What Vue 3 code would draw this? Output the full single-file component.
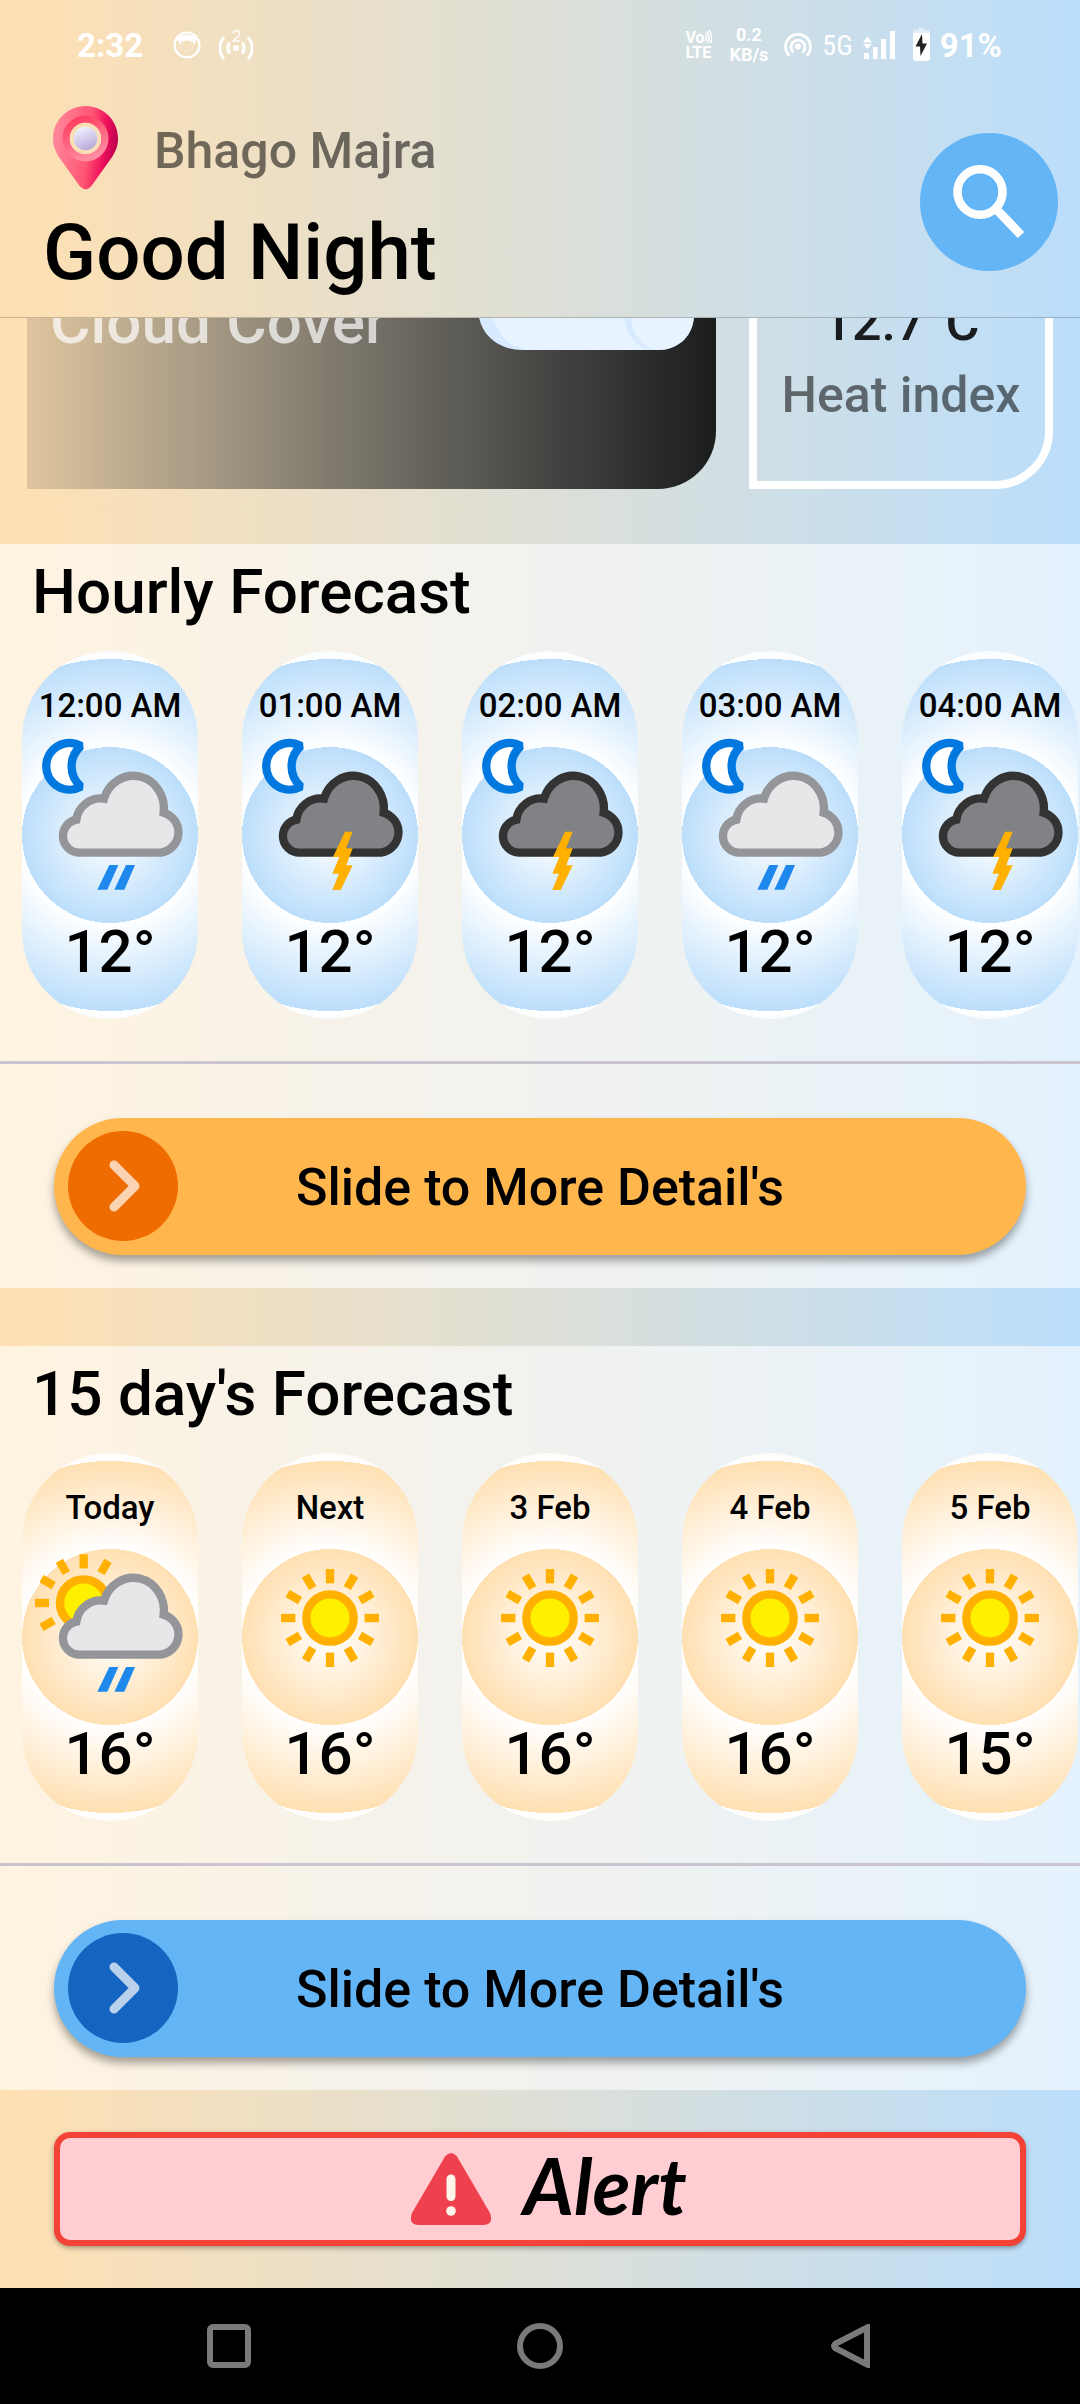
<script setup>
const forecasts = [
  {
    id: 'hourly',
    title: 'Hourly Forecast',
    items: [
      { label: '12:00 AM', temp: '12°', icon: 'night-rain' },
      { label: '01:00 AM', temp: '12°', icon: 'night-thunder' },
      { label: '02:00 AM', temp: '12°', icon: 'night-thunder' },
      { label: '03:00 AM', temp: '12°', icon: 'night-rain' },
      { label: '04:00 AM', temp: '12°', icon: 'night-thunder' },
    ],
  },
  {
    id: 'daily',
    title: "15 day's Forecast",
    items: [
      { label: 'Today', temp: '16°', icon: 'day-rain' },
      { label: 'Next', temp: '16°', icon: 'sunny' },
      { label: '3 Feb', temp: '16°', icon: 'sunny' },
      { label: '4 Feb', temp: '16°', icon: 'sunny' },
      { label: '5 Feb', temp: '15°', icon: 'sunny' },
    ],
  },
]

const rays = (from, to) => Array.from({ length: to - from }, (_, i) => (from + i) * 30)
const cloudPath =
  'M238 668A50 50 0 0 1 229 569A74 74 0 0 1 312 506A92 98 0 0 1 491 548A64 62 0 0 1 483 668Z'
</script>

<template>
  <div class="screen">
    <header class="top">
      <div class="status">
        <span class="clock">2:32</span>
        <svg class="face" width="28" height="28" viewBox="0 0 28 28">
          <circle cx="14" cy="14" r="12.4" fill="none" stroke="#fff" stroke-width="2.4" />
          <path
            d="M4 8C8 2 20 2 24 8L21 14L19.500 10.500H17L14.800 9.500H12.500L10.500 10.500H8.500L7 14Z"
            fill="#fff"
          />
          <path d="M8 16h1M19 16h1M12 20h1M16 19h1M17 13h1M10 13h1" stroke="#fff" stroke-width="1" />
        </svg>
        <svg class="tether" width="34" height="32" viewBox="0 0 34 32" fill="none" stroke="#fff">
          <circle cx="17" cy="19" r="3" fill="#fff" stroke="none" />
          <path d="M11 13.500A8 8 0 0 0 11 24.500M23 13.500A8 8 0 0 1 23 24.500" stroke-width="3" />
          <path d="M5 8.500A16 16 0 0 0 5 30M29 8.500A16 16 0 0 1 29 30" stroke-width="3" />
          <path d="M14.300 4.500C14.500 0.500 20.500 0.500 20.500 4.500C20.500 7 17 8.500 14 12.200H21" stroke-width="1.300" />
        </svg>
        <span class="spacer"></span>
        <span class="volte">
          <span class="vo">Vo<svg width="7" height="14" viewBox="0 0 7 14" fill="none" stroke="#fff" stroke-width="1.600"><path d="M0 4.500A4 4 0 0 1 0 11M1 1.500A8 8 0 0 1 2.500 13M3.500 0A11 11 0 0 1 5.500 13" /></svg></span>
          <span>LTE</span>
        </span>
        <span class="speed"><span>0.2</span><span>KB/s</span></span>
        <svg class="hotspot" width="28" height="26" viewBox="0 0 28 26" fill="none" stroke="#fff" stroke-width="2.800">
          <circle cx="14" cy="14.500" r="3" fill="#fff" stroke="none" />
          <path d="M9.500 20.500A7 7 0 1 1 18.500 20.500" />
          <path d="M5.500 23.800A12.400 12.400 0 1 1 22.500 23.800" />
        </svg>
        <span class="net">5G</span>
        <svg class="bars" width="32" height="28" viewBox="0 0 32 28" fill="#fff">
          <path d="M0 11.500L4.500 5.500L9 11.500ZM0 13L4.500 18L9 13Z" />
          <path d="M1 22h5v6h-5zM10 16h4.500v12H10zM18 8h5v20h-5zM27 0h5v28h-5z" />
        </svg>
        <svg class="battery" width="17" height="34" viewBox="0 0 17 34">
          <path d="M5.500 0h6v2H15q2 0 2 2.500V6H0V4.500Q0 2 2 2H5.500Z" fill="#e2effb" />
          <path d="M0 5h17v25q0 3-3 3H3q-3 0-3-3Z" fill="#fff" />
          <path d="M9 6L2.500 18.500H7L7.500 28L14 15.500H9.500Z" fill="#222" />
        </svg>
        <span class="clock">91%</span>
      </div>

      <div class="heading">
        <div>
          <div class="place">
            <svg width="65" height="84" viewBox="0 0 65 84">
              <defs>
                <linearGradient id="pinBody" x1="0" y1="0.300" x2="1" y2="0.450">
                  <stop offset="0" stop-color="#ff8a9c" />
                  <stop offset="0.550" stop-color="#ff5674" />
                  <stop offset="0.800" stop-color="#ee0f5c" />
                  <stop offset="1" stop-color="#b8004a" />
                </linearGradient>
                <linearGradient id="pinRing" x1="0.200" y1="0" x2="0.600" y2="1">
                  <stop offset="0" stop-color="#ff3f60" />
                  <stop offset="1" stop-color="#ff8ba0" />
                </linearGradient>
                <linearGradient id="pinBall" x1="0.300" y1="0" x2="0.700" y2="1">
                  <stop offset="0" stop-color="#f1f3ff" />
                  <stop offset="1" stop-color="#b7a5d8" />
                </linearGradient>
              </defs>
              <path
                d="M32.500 0C14.500 0 0 14.500 0 32.500C0 41 3 47 8 54L27 80.500Q32.500 86 38 80.500L57 54C62 47 65 41 65 32.500C65 14.500 50.500 0 32.500 0ZM32.500 16.500A16 16 0 1 1 32.500 48.500A16 16 0 1 1 32.500 16.500Z"
                fill="url(#pinBody)"
                fill-rule="evenodd"
              />
              <circle cx="32.500" cy="32.500" r="19.500" fill="none" stroke="url(#pinRing)" stroke-width="7" />
              <circle cx="32.500" cy="32.500" r="11.800" fill="url(#pinBall)" />
            </svg>
            <span class="place-name">Bhago Majra</span>
          </div>
          <h1>Good Night</h1>
        </div>
        <button class="search" type="button" aria-label="Search">
          <svg width="72" height="74" viewBox="0 0 72 74" fill="none" stroke="#fff">
            <ellipse cx="27" cy="27" rx="22.500" ry="22.800" stroke-width="8.500" />
            <path d="M45 46L68 70" stroke-width="9" />
          </svg>
        </button>
      </div>
    </header>

    <main>
      <div class="stats">
        <article class="cover">
          <span>Cloud Cover</span>
          <svg width="216" height="130" viewBox="0 0 216 130">
            <path
              d="M44 130C18 130 0 112 0 88C0 62 18 46 42 46C48 18 72 0 102 0C136 0 162 22 166 54C196 52 216 70 216 94C216 116 200 130 180 130Z"
              fill="#d8eaff"
            />
            <path
              d="M56 130C32 130 14 112 14 88C14 62 30 46 52 46C58 20 80 4 106 4C134 4 156 26 160 56C150 64 145 78 146 92C146 112 158 130 176 130Z"
              fill="#e7f4ff"
            />
            <path d="M153 94C153 72 168 57 184 57C204 58 216 74 216 94C216 116 200 130 180 130C164 128 153 114 153 94Z" fill="#e7f4ff" />
          </svg>
        </article>
        <article class="heat">
          <strong>12.7°C</strong>
          <span>Heat index</span>
        </article>
      </div>

      <section v-for="f in forecasts" :key="f.id" class="forecast" :class="f.id">
        <h2>{{ f.title }}</h2>
        <ul>
          <li v-for="item in f.items" :key="item.label">
            <span class="label">{{ item.label }}</span>
            <svg class="weather" viewBox="66 351 528 528">
              <g v-if="item.icon === 'day-rain'" stroke="#ffb000" stroke-width="25">
                <circle cx="251" cy="513" r="71" fill="#fff000" />
                <path
                  v-for="a in rays(5, 11)"
                  :key="a"
                  d="M355 513H397"
                  :transform="`rotate(${a} 251 513)`"
                />
              </g>
              <g v-if="item.icon === 'sunny'" stroke="#ffb000" stroke-width="25">
                <circle cx="330" cy="558" r="71" fill="#fff000" />
                <path
                  v-for="a in rays(0, 12)"
                  :key="a"
                  d="M434 558H477"
                  :transform="`rotate(${a} 330 558)`"
                />
              </g>
              <path
                v-if="item.icon.startsWith('night')"
                d="M243 348A70 70 0 1 0 243 470A80 80 0 0 1 243 348Z"
                fill="#fff"
                stroke="#0078e0"
                stroke-width="25"
                stroke-linejoin="bevel"
              />
              <g v-if="item.icon.endsWith('rain')">
                <path :d="cloudPath" fill="#e6e7e8" stroke="#939598" stroke-width="25" />
                <path d="M328 705H355L322 779H292ZM378 705H405L373 779H343Z" fill="#1e88ec" />
              </g>
              <g v-if="item.icon === 'night-thunder'">
                <path :d="cloudPath" fill="#818286" stroke="#333" stroke-width="25" />
                <path
                  d="M375 605H398L378 655H398L379 706H398L362 780H337L357 731H337L358 681H339Z"
                  fill="#ffb000"
                />
              </g>
            </svg>
            <span class="temp">{{ item.temp }}</span>
          </li>
        </ul>
        <hr />
        <button class="slide" type="button">
          <span class="knob">
            <svg width="32" height="52" viewBox="0 0 32 52">
              <path
                d="M5 5L26 26L5 47"
                fill="none"
                stroke="#fff"
                stroke-opacity="0.700"
                stroke-width="9"
                stroke-linecap="round"
                stroke-linejoin="round"
              />
            </svg>
          </span>
          <span class="slide-text">Slide to More Detail's</span>
        </button>
      </section>

      <button class="alert" type="button">
        <svg width="80" height="72" viewBox="0 0 80 72">
          <path d="M34 3.500Q40-3.500 46 3.500L79 60Q83 71 73 72H7Q-3 71 1 60Z" fill="#ef404e" />
          <path d="M40 26V43.500" stroke="#fff5ea" stroke-width="9" stroke-linecap="round" />
          <circle cx="40" cy="58" r="4.800" fill="#fff5ea" />
        </svg>
        <span class="alert-text">Alert</span>
      </button>
    </main>

    <nav class="system">
      <button type="button" aria-label="Recent apps">
        <svg width="44" height="44" viewBox="0 0 44 44"><rect x="3" y="3" width="38" height="38" rx="3" /></svg>
      </button>
      <button type="button" aria-label="Home">
        <svg width="46" height="46" viewBox="0 0 46 46"><circle cx="23" cy="23" r="20" /></svg>
      </button>
      <button type="button" aria-label="Back">
        <svg width="40" height="44" viewBox="0 0 40 44"><path d="M36 3.500V40.500L4 24Q2 22 4 20Z" /></svg>
      </button>
    </nav>
  </div>
</template>

<style>
body {
  margin: 0;
}
</style>

<style scoped>
.screen {
  display: flex;
  flex-direction: column;
  min-height: 100vh;
  overflow: hidden;
  background: linear-gradient(90deg, #ffe0b2, #bbdefb);
  font-family: Roboto, 'Liberation Sans', sans-serif;
  font-weight: 500;
  color: #000;
}
main {
  flex: 1;
}
svg {
  display: block;
  flex: none;
}
button {
  margin: 0;
  padding: 0;
  border: 0;
  font: inherit;
  color: inherit;
  cursor: pointer;
}

.top {
  border-bottom: 1px solid rgba(0, 0, 0, 0.2);
}
.status {
  display: flex;
  align-items: center;
  height: 90px;
  padding: 0 78px 0 77px;
  color: #fff;
}
.clock {
  font-size: 33px;
  font-weight: 700;
}
.face {
  margin-left: 30px;
}
.tether {
  margin-left: 18px;
}
.spacer {
  flex: 1;
}
.volte {
  display: flex;
  flex-direction: column;
  font-size: 16px;
  font-weight: 700;
  line-height: 15px;
}
.vo {
  display: flex;
}
.speed {
  display: flex;
  flex-direction: column;
  align-items: center;
  margin-left: 18px;
  font-size: 18px;
  font-weight: 700;
  line-height: 20px;
}
.hotspot {
  margin-left: 16px;
}
.net {
  margin-left: 10px;
  font-family: 'Roboto Condensed', Roboto, sans-serif;
  font-size: 28px;
  font-weight: 400;
}
.bars {
  margin-left: 10px;
}
.battery {
  margin: 0 10px 0 18px;
}

.heading {
  display: flex;
  align-items: center;
  justify-content: space-between;
  padding: 16px 22px 19px 43px;
}
.place {
  display: flex;
  align-items: center;
  gap: 36px;
  padding-left: 10px;
  font-size: 50px;
  line-height: 60px;
  color: rgba(0, 0, 0, 0.54);
}
.place-name {
  padding-top: 6px;
}
h1 {
  margin: 18px 0 0;
  font-size: 78px;
  font-weight: 500;
  line-height: 90px;
}
.search {
  display: grid;
  place-items: center;
  width: 138px;
  height: 138px;
  border-radius: 50%;
  background: #64b5f6;
}

.stats {
  display: flex;
  align-items: flex-end;
  gap: 33px;
  height: 171px;
  padding: 0 27px;
  overflow: hidden;
}
.cover {
  flex: 686;
  display: flex;
  align-items: flex-end;
  justify-content: space-between;
  box-sizing: border-box;
  padding: 100px 22px 139px 23px;
  border-radius: 0 58px 58px 0;
  background: linear-gradient(90deg, rgba(0, 0, 0, 0.12), rgba(0, 0, 0, 0.87));
  font-size: 62px;
  line-height: 56px;
  color: rgba(255, 255, 255, 0.7);
}
.heat {
  flex: 307;
  display: flex;
  flex-direction: column;
  align-items: center;
  gap: 12px;
  box-sizing: border-box;
  padding: 100px 0 56px;
  border: 8px solid #fff;
  border-radius: 0 58px 58px 0;
  font-size: 50px;
  line-height: 60px;
  color: rgba(0, 0, 0, 0.54);
}
.heat strong {
  font-size: 52px;
  font-weight: 500;
  color: rgba(0, 0, 0, 0.87);
}

.forecast {
  margin-top: 58px;
  padding: 12px 0 33px;
  background: rgba(255, 255, 255, 0.6);
}
.stats + .forecast {
  margin-top: 55px;
}
h2 {
  margin: 0 0 23px;
  padding: 0 32px;
  font-size: 62px;
  font-weight: 500;
  line-height: 72px;
}
ul {
  display: flex;
  gap: 44px;
  margin: 0;
  padding: 0 0 42px 22px;
  overflow: hidden;
  list-style: none;
}
li {
  flex: none;
  display: flex;
  flex-direction: column;
  align-items: center;
  box-sizing: border-box;
  width: 176px;
  padding: 33px 0 38px;
  border-radius: 88px;
}
.hourly li {
  background: repeating-radial-gradient(circle at center, #fff 0, #bbdefb 88px);
}
.daily li {
  background: repeating-radial-gradient(circle at center, #fff 0, #ffe0b2 88px);
}
.label {
  margin-bottom: 19px;
  font-size: 33px;
  line-height: 44px;
}
.weather {
  width: 176px;
  height: 176px;
  overflow: visible;
}
.temp {
  font-size: 60px;
  line-height: 58px;
}
hr {
  height: 3px;
  margin: 0 0 54px;
  border: 0;
  background: #cac4d0;
}
.slide {
  display: flex;
  align-items: center;
  box-sizing: border-box;
  width: calc(100% - 108px);
  margin: 0 54px;
  padding: 13px 124px 14px 14px;
  border-radius: 69px;
  box-shadow: 0 6px 9px rgba(0, 0, 0, 0.35);
}
.knob {
  display: grid;
  place-items: center;
  box-sizing: border-box;
  width: 110px;
  height: 110px;
  padding-left: 3px;
  border-radius: 50%;
}
.slide-text {
  flex: 1;
  padding-top: 4px;
  font-size: 52px;
  line-height: 60px;
}
.hourly .slide {
  background: #ffb74d;
}
.hourly .knob {
  background: #ef6c00;
}
.daily .slide {
  background: #64b5f6;
}
.daily .knob {
  background: #1565c0;
}

.alert {
  display: flex;
  align-items: center;
  justify-content: center;
  gap: 32px;
  box-sizing: border-box;
  width: calc(100% - 108px);
  height: 114px;
  margin: 42px 54px;
  padding-left: 18px;
  border: 6px solid #f44336;
  border-radius: 16px;
  background: #ffcdd2;
  box-shadow: 0 2px 5px rgba(0, 0, 0, 0.35);
}
.alert-text {
  padding-bottom: 8px;
  font-family: Lato, sans-serif;
  font-size: 78px;
  font-style: italic;
  font-weight: 700;
  line-height: 90px;
}

.system {
  display: grid;
  grid-template-columns: repeat(3, 1fr);
  height: 116px;
  padding: 0 73px;
  background: #000;
}
.system button {
  display: grid;
  place-items: center;
  background: none;
}
.system svg {
  fill: none;
  stroke: #7a7a7a;
  stroke-width: 6px;
}
</style>
